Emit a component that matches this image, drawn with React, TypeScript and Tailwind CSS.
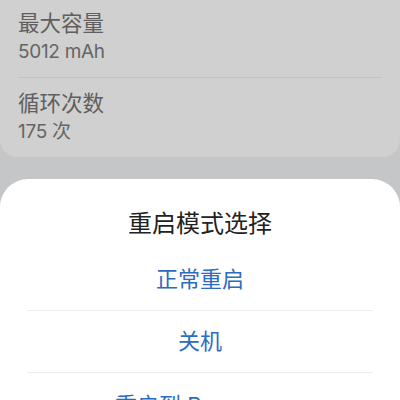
const font = { fontFamily: '"Inter", "Noto Sans CJK SC", sans-serif' };

const infoRows = [
  { label: "最大容量", value: "5012 mAh" },
  { label: "循环次数", value: "175 次" },
];

const modes = ["正常重启", "关机", "重启到 Recovery"];

export default function App() {
  return (
    <div
      className="w-[400px] h-[400px] overflow-hidden bg-[#c5c6c8] flex flex-col"
      style={font}
    >
      {/* Dimmed battery card behind the sheet */}
      <div className="bg-[#d0d0d0] rounded-b-[18px] px-[18px]">
        {infoRows.map((row, i) => (
          <div key={row.label}>
            {i > 0 && <div className="h-px bg-[#c2c2c2]" />}
            <div className={i === 0 ? "pt-[9px] pb-[12px]" : "pt-[11px] pb-[12px]"}>
              <div className="text-[21.5px] leading-[28px] text-[#5f5f5f]">{row.label}</div>
              <div className="text-[19px] leading-[26px] mt-[2px] text-[#656565] tracking-[-0.3px]">{row.value}</div>
            </div>
          </div>
        ))}
      </div>

      {/* Bottom sheet */}
      <div className="mt-[22px] flex-1 bg-white rounded-t-[28px] flex flex-col">
        <div className="pt-[30px] text-center text-[24px] leading-[30px] text-[#222222]">
          重启模式选择
        </div>
        <div className="mt-[10px] flex flex-col">
          {modes.map((m, i) => (
            <div key={m}>
              {i > 0 && <div className="mx-[27px] h-px bg-[#ececec]" />}
              <div
                className={
                  "h-[61px] flex items-center justify-center text-[22px] text-[#2a6cc0]" +
                  (i === 2 ? " pt-[3px]" : "")
                }
              >
                {m}
              </div>
            </div>
          ))}
        </div>
      </div>
    </div>
  );
}
